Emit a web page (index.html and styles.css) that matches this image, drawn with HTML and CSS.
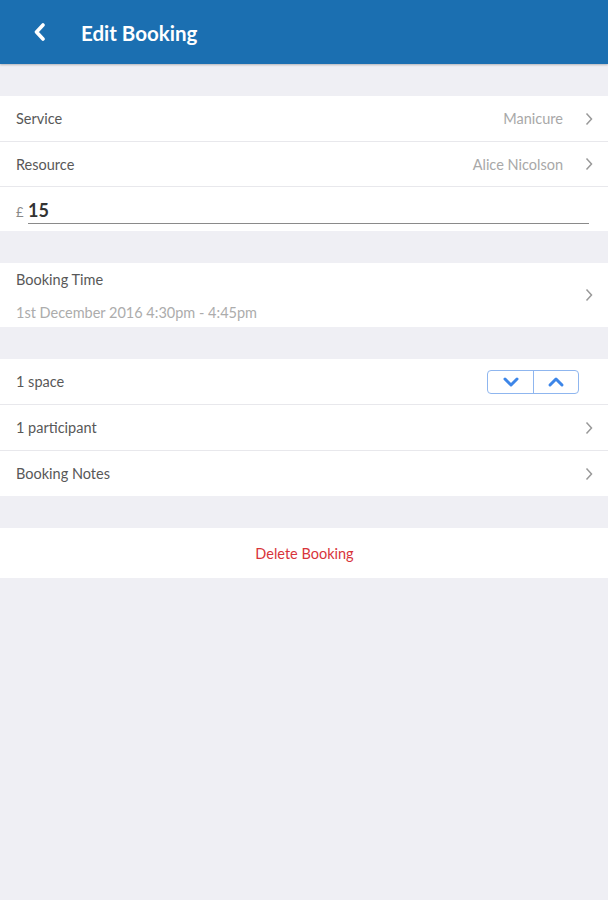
FILE: index.html
```html
<!DOCTYPE html>
<html>
<head>
<meta charset="utf-8">
<link rel="stylesheet" href="styles.css">
</head>
<body>
<header class="bar">
  <svg class="back" width="14" height="18" viewBox="0 0 14 18"><path d="M10 2 L3.5 9 L10 16" fill="none" stroke="#fff" stroke-width="3.6" stroke-linecap="round" stroke-linejoin="round"/></svg>
  <h1 class="title">Edit Booking</h1>
</header>
<main class="content">
  <section class="group">
    <div class="row"><span class="label">Service</span><span class="value">Manicure</span><svg class="chev" viewBox="0 0 8 14"><path d="M1.5 1.5 L6.5 7 L1.5 12.5" fill="none" stroke="#999" stroke-width="1.5"/></svg></div>
    <div class="row"><span class="label">Resource</span><span class="value">Alice Nicolson</span><svg class="chev" viewBox="0 0 8 14"><path d="M1.5 1.5 L6.5 7 L1.5 12.5" fill="none" stroke="#999" stroke-width="1.5"/></svg></div>
    <div class="row price"><span class="cur">£</span><span class="amount">15</span></div>
  </section>
  <section class="group">
    <div class="row tall">
      <div class="stack"><span class="label">Booking Time</span><span class="sub">1st December 2016 4:30pm - 4:45pm</span></div>
      <svg class="chev" viewBox="0 0 8 14"><path d="M1.5 1.5 L6.5 7 L1.5 12.5" fill="none" stroke="#999" stroke-width="1.5"/></svg>
    </div>
  </section>
  <section class="group">
    <div class="row"><span class="label">1 space</span>
      <div class="stepper">
        <button class="step"><svg width="18" height="12" viewBox="0 0 18 12"><path d="M3 3 L9 9 L15 3" fill="none" stroke="#3d86e8" stroke-width="3" stroke-linecap="round" stroke-linejoin="round"/></svg></button>
        <button class="step"><svg width="18" height="12" viewBox="0 0 18 12"><path d="M3 9 L9 3 L15 9" fill="none" stroke="#3d86e8" stroke-width="3" stroke-linecap="round" stroke-linejoin="round"/></svg></button>
      </div>
    </div>
    <div class="row"><span class="label">1 participant</span><svg class="chev" viewBox="0 0 8 14"><path d="M1.5 1.5 L6.5 7 L1.5 12.5" fill="none" stroke="#999" stroke-width="1.5"/></svg></div>
    <div class="row"><span class="label">Booking Notes</span><svg class="chev" viewBox="0 0 8 14"><path d="M1.5 1.5 L6.5 7 L1.5 12.5" fill="none" stroke="#999" stroke-width="1.5"/></svg></div>
  </section>
  <section class="group">
    <div class="row delete">Delete Booking</div>
  </section>
</main>
</body>
</html>
```
FILE: styles.css
```css
* { box-sizing: border-box; }
html, body { margin: 0; padding: 0; }
body {
  width: 608px;
  height: 900px;
  background: #efeff4;
  font-family: Lato, "Open Sans", sans-serif;
  overflow: hidden;
}
.bar {
  height: 64px;
  background: #1b6fb1;
  display: flex;
  align-items: center;
  padding-left: 33px;
  box-shadow: 0 1px 2px rgba(0,0,0,0.25);
}
.back { margin-top: 0; }
.title {
  margin: 2px 0 0 34px;
  color: #fff;
  font-size: 20.5px;
  font-weight: 700;
}
.content {
  padding-top: 32px;
  display: flex;
  flex-direction: column;
  gap: 32px;
}
.group {
  background: #fff;
  display: flex;
  flex-direction: column;
}
.row {
  height: 45px;
  display: flex;
  align-items: center;
  padding: 0 15px 0 16px;
  border-top: 1px solid #e8e8ec;
}
.row:first-child { border-top: none; }
.group:nth-child(3) .row + .row { height: 46px; }
.label {
  font-size: 14.5px;
  color: #585858;
  flex: 1;
}
.value {
  font-size: 14.5px;
  color: #a8a8a8;
  margin-right: 22px;
}
.chev { width: 8px; height: 14px; }
.price {
  align-items: flex-start;
  padding-top: 14px;
}
.cur {
  font-size: 13px;
  color: #888;
  margin-top: 3px;
  width: 12px;
}
.amount {
  flex: 1;
  font-size: 18px;
  font-weight: 700;
  color: #333;
  border-bottom: 1px solid #8a8a8a;
  height: 23px;
  line-height: 18px;
  margin-right: 4px;
}
.row.tall { height: 64px; }
.stack {
  flex: 1;
  display: flex;
  flex-direction: column;
  gap: 16px;
  padding-top: 2px;
}
.sub { font-size: 14.5px; color: #acacac; }
.stepper {
  display: flex;
  border: 1px solid #8fb6ef;
  border-radius: 4px;
  height: 24px;
  margin-right: 14px;
}
.step {
  width: 45px;
  height: 22px;
  border: none;
  background: transparent;
  display: flex;
  align-items: center;
  justify-content: center;
  padding: 0;
}
.step + .step { border-left: 1px solid #8fb6ef; }
.row.delete {
  height: 50px;
  justify-content: center;
  color: #d8343b;
  font-size: 14.5px;
}
```
